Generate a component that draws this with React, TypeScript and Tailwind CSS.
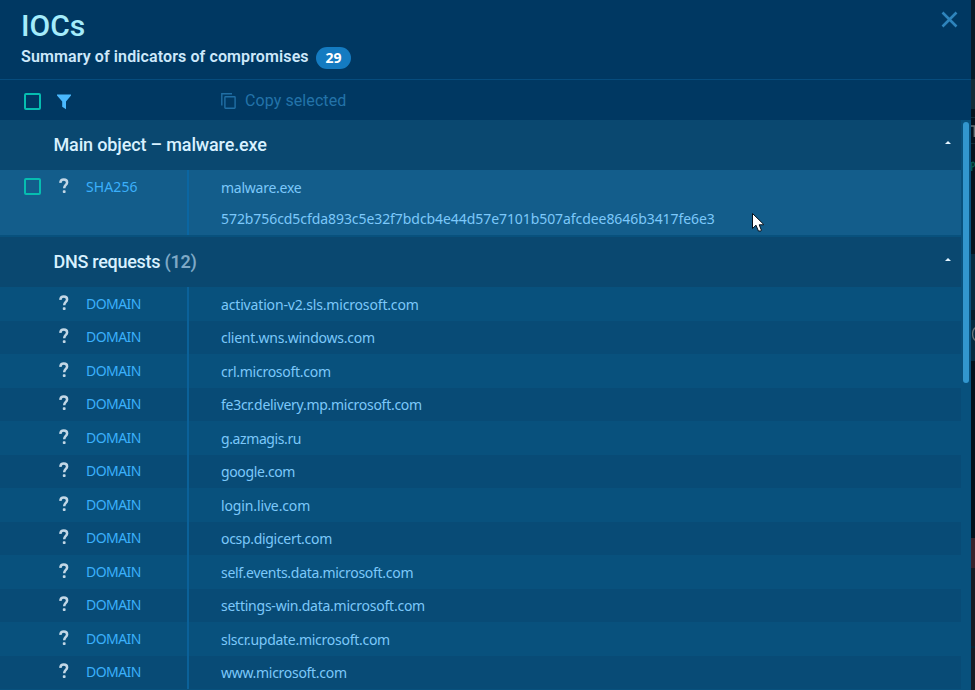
const domains = [
  { name: 'activation-v2.sls.microsoft.com', tracking: 'tracking-[-0.16px]' },
  { name: 'client.wns.windows.com', tracking: 'tracking-[-0.25px]' },
  { name: 'crl.microsoft.com', tracking: 'tracking-[-0.27px]' },
  { name: 'fe3cr.delivery.mp.microsoft.com', tracking: 'tracking-[-0.28px]' },
  { name: 'g.azmagis.ru', tracking: 'tracking-[-0.4px]' },
  { name: 'google.com', tracking: 'tracking-[-0.36px]' },
  { name: 'login.live.com', tracking: 'tracking-[-0.13px]' },
  { name: 'ocsp.digicert.com', tracking: 'tracking-[-0.31px]' },
  { name: 'self.events.data.microsoft.com', tracking: 'tracking-[-0.29px]' },
  { name: 'settings-win.data.microsoft.com', tracking: 'tracking-[-0.24px]' },
  { name: 'slscr.update.microsoft.com', tracking: 'tracking-[-0.27px]' },
  { name: 'www.microsoft.com', tracking: 'tracking-[-0.29px]' },
];

const valueFont = "font-['Noto_Sans',sans-serif] text-[14px] leading-[20px] text-[#7cc8fa]";
const labelFont = "font-['Noto_Sans',sans-serif] text-[14px] leading-[20px] text-[#3bb0fb]";

function Checkbox() {
  return <span className="block h-[17px] w-[17px] shrink-0 rounded-[2px] border-2 border-[#06bdb0]" />;
}

function Question() {
  return (
    <svg className="block h-[16px] w-[10px]" viewBox="0 0 10 16" fill="none">
      <path d="M1.3 4.8C1.5 2.7 2.8 1.6 4.8 1.6C7 1.6 8.1 2.7 8.1 4.5C8.1 7 5.2 7 5.2 10.3" stroke="#c2d7e6" strokeWidth="2.5" />
      <rect x="3.8" y="12.2" width="2.8" height="2.8" rx="0.8" fill="#c2d7e6" />
    </svg>
  );
}

function Caret() {
  return (
    <svg className="block h-[3px] w-[6px]" viewBox="0 0 6 3">
      <path d="M0 3L3 0L6 3Z" fill="#e3f4ff" />
    </svg>
  );
}

function SectionHeader({ title, count }: { title: string; count?: string }) {
  return (
    <div className="flex h-[50px] items-center justify-between bg-[#0a4870] pr-[10px] pl-[53.5px]">
      <h2 className={`text-[18px] leading-[24px] font-medium text-[#d8f1ff] ${count ? 'tracking-[-0.28px]' : 'tracking-[-0.15px]'}`}>
        {title}
        {count && <span className="font-semibold text-[#7ea8c6]"> {count}</span>}
      </h2>
      <div className="pb-[5px]">
        <Caret />
      </div>
    </div>
  );
}

function DomainRow({ name, tracking, dark }: { name: string; tracking: string; dark: boolean }) {
  return (
    <div className={`flex h-[33.5px] ${dark ? 'bg-[#084b76]' : 'bg-[#08517d]'}`}>
      <div className="flex w-[189px] shrink-0 border-r-2 border-[#0b6199] pl-[59px]">
        <div className="w-[27px] pt-[7.8px]">
          <Question />
        </div>
        <div className={`pt-[6.8px] tracking-[-0.55px] ${labelFont}`}>DOMAIN</div>
      </div>
      <div className={`pt-[7.8px] pl-[32px] ${tracking} ${valueFont}`}>{name}</div>
    </div>
  );
}

export default function App() {
  return (
    <div className="flex h-[690px] w-[975px] overflow-hidden bg-[#08517d] font-[Roboto,sans-serif]">
      <div className="flex w-[971px] flex-col">
        <header className="flex h-[80px] shrink-0 justify-between border-b border-[#064c7d] bg-[#003862] pr-[13px] pl-[21px]">
          <div className="pt-[8px]">
            <h1 className="text-[30px] leading-[36px] font-medium text-[#a5ecfb]">IOCs</h1>
            <div className="flex">
              <p className="w-[288px] pt-[2px] text-[16px] leading-[22px] font-semibold tracking-[0.11px] whitespace-nowrap text-[#cde8fa]">
                Summary of indicators of compromises
              </p>
              <span className="mt-[3px] ml-[7px] flex h-[22px] w-[35px] items-center justify-center rounded-full bg-[#147bc1] pb-[1px] font-['Noto_Sans',sans-serif] text-[14px] font-bold text-white">
                29
              </span>
            </div>
          </div>
          <svg className="mt-[11px] h-[17px] w-[17px]" viewBox="0 0 17 17">
            <path d="M1.5 1.5L15.5 15.5M15.5 1.5L1.5 15.5" stroke="#2e84bc" strokeWidth="2.6" />
          </svg>
        </header>

        <div className="flex h-[40px] shrink-0 items-center bg-[#003862] pt-[2px] pl-[24px]">
          <Checkbox />
          <svg className="mt-[2px] ml-[16px] h-[16px] w-[14px]" viewBox="0 0 14 16">
            <path d="M0 0.5H14V1.5L9 7.5V15.2L5.2 12.8V7.5L0 1.5Z" fill="#4ab9fe" />
          </svg>
          <svg className="ml-[150px] h-[16px] w-[15px]" viewBox="0 0 15 16" fill="none" stroke="#206fa5" strokeWidth="1.4">
            <path d="M0.8 12.5V0.8H11" />
            <rect x="3.9" y="3.8" width="10.2" height="11.4" rx="0.6" />
          </svg>
          <span className="ml-[9px] text-[16px] leading-[20px] tracking-[0.09px] text-[#2373a9]">Copy selected</span>
        </div>

        <div className="flex min-h-0 flex-1">
          <main className="w-[961px]">
            <SectionHeader title="Main object – malware.exe" />
            <div className="flex h-[65px] bg-[#135d8b]">
              <div className="flex w-[189px] shrink-0 border-r-2 border-[#0b66a2] pl-[24px]">
                <div className="w-[35px] pt-[8px]">
                  <Checkbox />
                </div>
                <div className="w-[27px] pt-[8px]">
                  <Question />
                </div>
                <div className={`pt-[7px] tracking-[0.1px] ${labelFont}`}>SHA256</div>
              </div>
              <div className={`flex flex-col gap-[11px] pt-[8px] pl-[32px] ${valueFont}`}>
                <span className="tracking-[-0.25px]">malware.exe</span>
                <span className="tracking-[-0.07px]">572b756cd5cfda893c5e32f7bdcb4e44d57e7101b507afcdee8646b3417fe6e3</span>
              </div>
            </div>
            <div className="h-[2px] bg-[#08517d]" />
            <SectionHeader title="DNS requests" count="(12)" />
            {domains.map(({ name, tracking }, i) => (
              <DomainRow key={name} name={name} tracking={tracking} dark={i % 2 === 1} />
            ))}
          </main>
          <div className="w-[10px] bg-[#08517d] pt-[2px] pl-[2px]">
            <div className="h-[261px] w-[6px] rounded-full bg-[#3296ce]" />
          </div>
        </div>
      </div>

      <aside className="w-[4px] overflow-hidden bg-[#06141f]">
        <div className="h-[79px] bg-[#061b29]" />
        <div className="h-[30px] bg-[#142d38]" />
        <div className="h-[8px]" />
        <div className="h-[27px] border-y border-[#142d38]">
          <svg className="mt-[7px] h-[12px] w-[4px]" viewBox="0 0 4 12" fill="none" stroke="#68747a" strokeWidth="1.6">
            <path d="M0 1H4M3.4 1V12" />
          </svg>
        </div>
        <div className="h-[58px] border-t-[10px] border-[#06141f]">
          <svg className="mt-[7px] h-[10px] w-[4px]" viewBox="0 0 4 10" fill="none" stroke="#07594d" strokeWidth="1.4">
            <path d="M0.7 10V1M0.7 2C2 0.5 3.4 1.6 3.4 3.4C3.4 5.4 2 6.4 0.7 5.4" />
          </svg>
        </div>
        <div className="h-[52px]" />
        <div className="h-[56px] bg-[#052b40]" />
        <div className="h-[51px] border-t-[10px] border-[#061b29] bg-[#052b40] pt-[7px]">
          <svg className="h-[14px] w-[4px]" viewBox="0 0 4 14" fill="none" stroke="#68747a" strokeWidth="1.3">
            <path d="M4 0.8C0.8 3.5 0.8 10.5 4 13.2" />
          </svg>
        </div>
        <div className="h-[177px] bg-[#03121e]" />
        <div className="h-[30px] bg-[#38232c]" />
        <div className="h-[80px] border-b-2 border-[#082332] bg-[#161c25]" />
        <div className="h-[42px] bg-[#161c25]" />
      </aside>

      <svg className="absolute top-[213px] left-[752px] h-[19px] w-[13px]" viewBox="0 0 13 19">
        <path d="M0.5 0.5V15.5L4 12.2L6.4 18H9L9.4 17.2L7.2 11.8H11.5V11.2Z" fill="#fff" stroke="#06111c" strokeLinejoin="round" />
      </svg>
    </div>
  );
}
